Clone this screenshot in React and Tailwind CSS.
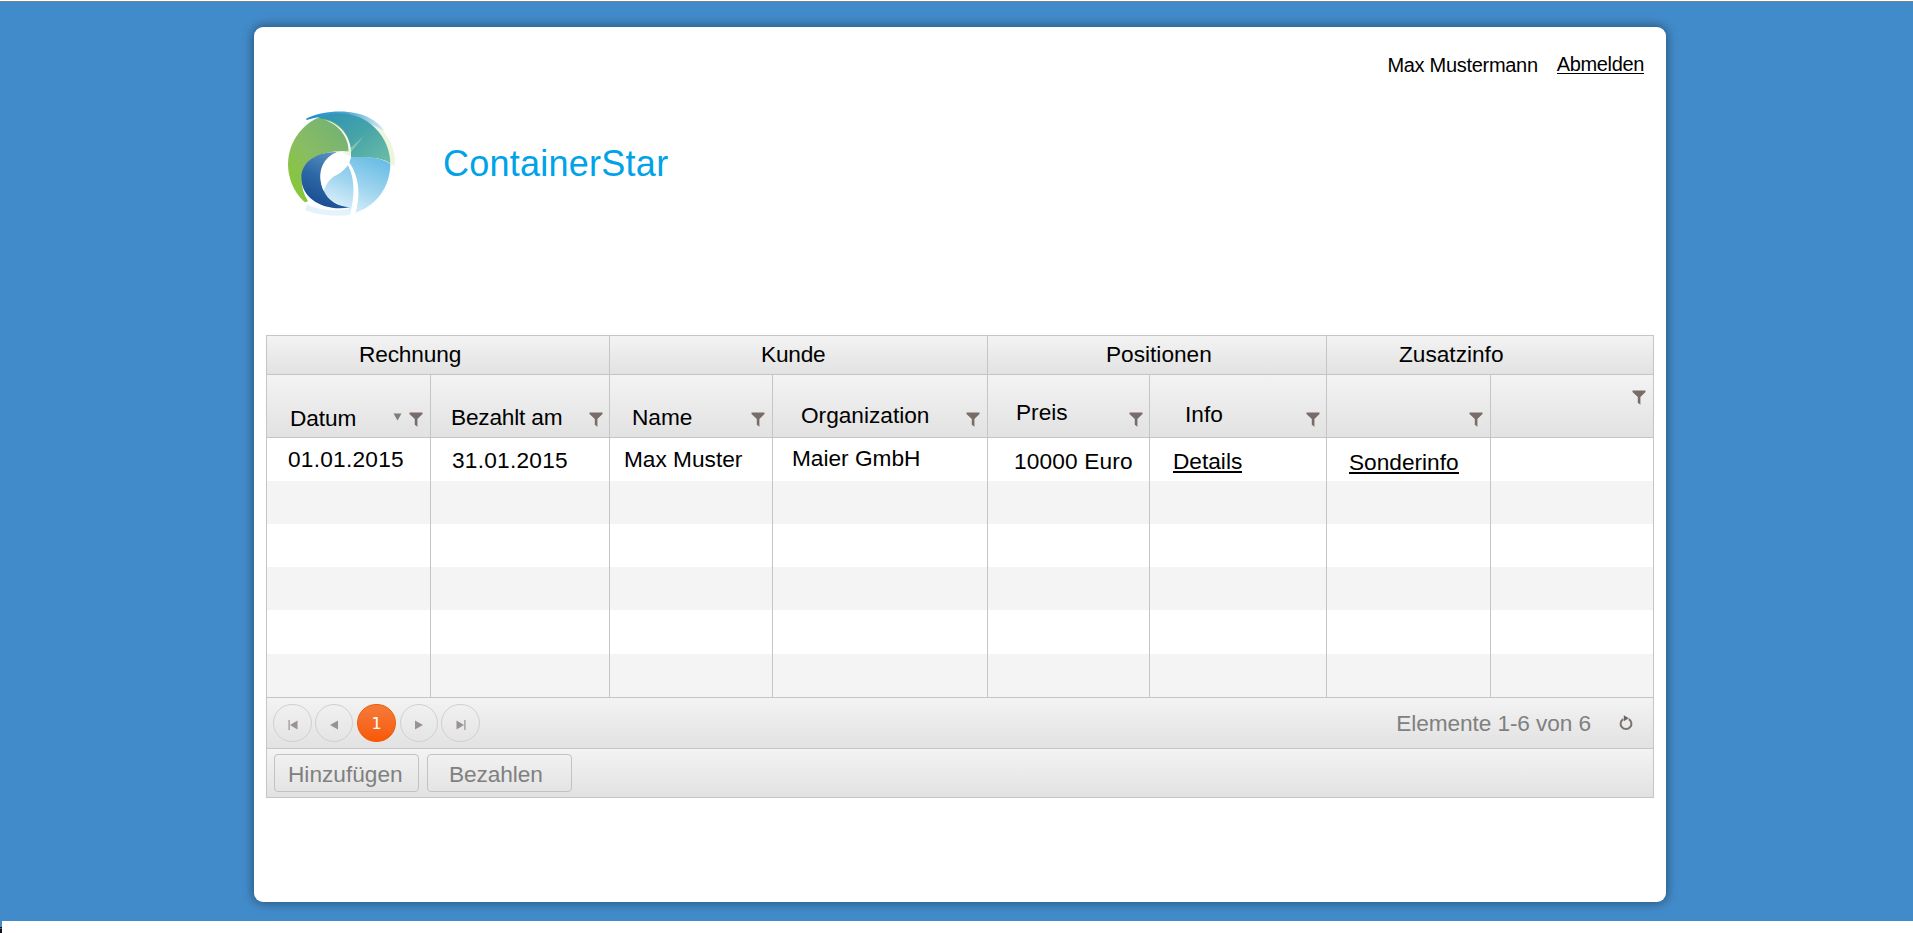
import React from "react";

const Funnel = ({ className = "" }) => (
  <svg className={`h-[16px] w-[14px] shrink-0 ${className}`} viewBox="0 0 14 16">
    <path d="M0.5 0.5H13.5V2L8.4 7V14.8L5.8 12.8V7L0.5 2Z" fill="#776c67" />
  </svg>
);

const Logo = () => (
  <svg className="h-[135px] w-[140px] shrink-0" viewBox="0 0 420 405">
    <defs>
      <linearGradient id="green" x1="1" y1="0" x2="0.1" y2="1">
        <stop offset="0" stopColor="#6fb078" />
        <stop offset="0.5" stopColor="#8abd62" />
        <stop offset="1" stopColor="#86cc20" />
      </linearGradient>
      <linearGradient id="teal" x1="0" y1="0" x2="1" y2="0.8">
        <stop offset="0" stopColor="#2b91b8" />
        <stop offset="0.5" stopColor="#45a3a8" />
        <stop offset="1" stopColor="#6cbda6" />
      </linearGradient>
      <linearGradient id="sky" gradientUnits="userSpaceOnUse" x1="310" y1="185" x2="240" y2="350">
        <stop offset="0" stopColor="#69bde5" />
        <stop offset="0.55" stopColor="#a0d5ef" />
        <stop offset="1" stopColor="#d6eefa" />
      </linearGradient>
      <linearGradient id="navy" x1="0.7" y1="0" x2="0.3" y2="1">
        <stop offset="0" stopColor="#5b93c0" />
        <stop offset="0.5" stopColor="#2d68a6" />
        <stop offset="1" stopColor="#174b90" />
      </linearGradient>
      <linearGradient id="rim" x1="0" y1="0" x2="1" y2="0">
        <stop offset="0" stopColor="#168bd0" />
        <stop offset="0.5" stopColor="#4ca5d5" />
        <stop offset="1" stopColor="#d5ebf6" />
      </linearGradient>
      <clipPath id="ball">
        <circle cx="207.5" cy="208" r="153.5" />
      </clipPath>
    </defs>
    <path d="M310 80C352 112 379 160 374 212L355 205L300 100Z" fill="#edf6dc" />
    <path d="M112 328C150 350 205 350 258 336L256 358C205 366 145 362 105 345Z" fill="#e4f2fb" />
    <path d="M108 71C165 44 250 42 300 70C322 82 336 96 343 108C315 92 280 73 235 66C190 60 150 62 110 75Z" fill="url(#rim)" />
    <g clipPath="url(#ball)">
      <path d="M135 68C180 40 400 20 400 205H360C345 190 295 184 243 188C246 130 215 83 135 68Z" fill="url(#teal)" />
      <path d="M243 187C295 183 345 190 362 208H380V380H240L238 339C195 330 165 305 157 280C167 262 178 254 192 243C210 234 228 222 238 204Z" fill="url(#sky)" />
      <path d="M20 73H110C165 62 210 82 230 120C240 140 242 155 238 170C180 164 125 178 103 216C90 245 92 285 114 318L60 345H20Z" fill="url(#green)" />
    </g>
    <path d="M233 209C251 242 259 292 238 366L254 362C273 305 268 246 239 204Z" fill="#ffffff" />
    <path d="M160 73C213 85 247 130 243 183L235 180C241 137 214 91 160 73Z" fill="#f7fcf5" />
    <path d="M94 248C94 205 133 170 202 171C153 190 140 240 160 284C174 318 205 334 239 337C165 350 94 313 94 248Z" fill="url(#navy)" />
    <path d="M201 172C218 166 235 171 238 187C236 216 213 235 192 244C178 255 168 267 161 288C143 245 154 192 201 172Z" fill="#ffffff" />
    <path d="M187 151L218 174L238 162L282 123L244 170L239 184L222 176Z" fill="#d4ebbd" opacity="0.4" />
  </svg>
);

/* w: column width including its right rule; each text carries its own offset. */
const groups = [
  { label: "Rechnung", w: "w-[343px]", pos: "ml-[92px] tracking-[-0.15px]" },
  { label: "Kunde", w: "w-[378px]", pos: "ml-[151px] tracking-[-0.2px]" },
  { label: "Positionen", w: "w-[339px]", pos: "ml-[118px]" },
  { label: "Zusatzinfo", w: "w-[326px]", pos: "ml-[72px]" },
];

const columns = [
  { w: "w-[164px]", head: "Datum", headPos: "ml-[23px] mt-[31px] tracking-[-0.1px]", sort: true, funnel: "mr-[7px] mt-[37px]", cell: "01.01.2015", cellPos: "ml-[21px] mt-[9px] tracking-[0.25px]" },
  { w: "w-[179px]", head: "Bezahlt am", headPos: "ml-[20px] mt-[30px] tracking-[-0.2px]", funnel: "mr-[6px] mt-[37px]", cell: "31.01.2015", cellPos: "ml-[21px] mt-[10px] tracking-[0.25px]" },
  { w: "w-[163px]", head: "Name", headPos: "ml-[22px] mt-[30px]", funnel: "mr-[7px] mt-[37px]", cell: "Max Muster", cellPos: "ml-[14px] mt-[9px]" },
  { w: "w-[215px]", head: "Organization", headPos: "ml-[28px] mt-[28px]", funnel: "mr-[7px] mt-[37px]", cell: "Maier GmbH", cellPos: "ml-[19px] mt-[8px]" },
  { w: "w-[162px]", head: "Preis", headPos: "ml-[28px] mt-[25px]", funnel: "mr-[6px] mt-[37px]", cell: "10000 Euro", cellPos: "ml-[26px] mt-[11px] tracking-[0.15px]" },
  { w: "w-[177px]", head: "Info", headPos: "ml-[35px] mt-[27px]", funnel: "mr-[6px] mt-[37px]", cell: "Details", link: true, cellPos: "ml-[23px] mt-[11px]" },
  { w: "w-[164px]", head: "", headPos: "", funnel: "mr-[7px] mt-[37px]", cell: "Sonderinfo", link: true, cellPos: "ml-[22px] mt-[12px]" },
  { w: "w-[162px]", head: "", headPos: "", funnel: "mr-[7px] mt-[15px]", cell: "", cellPos: "" },
];

const rows = [
  "h-[43px] bg-white",
  "h-[43px] bg-[#f4f4f4]",
  "h-[43px] bg-white",
  "h-[43px] bg-[#f4f4f4]",
  "h-[44px] bg-white",
  "h-[43px] bg-[#f4f4f4]",
];

const bar = "bg-linear-to-b from-[#f3f3f3] to-[#e2e2e2]";
const rule = "border-r border-[#c5c5c5] last:border-r-0";

const PageButton = ({ children, className }) => (
  <button className={`flex h-[38px] items-center justify-center rounded-full border border-[#d0d0d0] pt-[3px] ${className}`}>
    <svg className="h-[10px] w-[10px]" viewBox="0 0 10 10" fill="#999290">{children}</svg>
  </button>
);

export default function App() {
  return (
    <div className="flex h-[933px] w-[1913px] flex-col overflow-hidden bg-white font-['Liberation_Sans',Arial,sans-serif] text-[22.67px] leading-[24px] text-black">
      <div className="mt-px h-px shrink-0 bg-[#77838c]" />
      <div className="h-[919px] shrink-0 bg-[#428bca] pl-[254px] pt-[25px]">
        <main className="flex h-[875px] w-[1412px] flex-col rounded-[9px] bg-white px-3 shadow-[0_0_11px_1px_rgba(0,0,0,0.42)]">
          <header className="flex h-[308px] flex-col">
            <div className="flex h-[68px] justify-end pr-[10px] text-[20px]">
              <span className="mt-[26px] whitespace-nowrap tracking-[-0.3px]">Max Mustermann</span>
              <a className="ml-[19px] mt-[25px] h-[22px] border-b border-black tracking-[-0.35px]">Abmelden</a>
            </div>
            <div className="flex pl-1">
              <Logo />
              <h1 className="ml-[33px] mt-[49px] text-[36px] leading-[40px] tracking-[0.25px] text-[#00a2e8]">ContainerStar</h1>
            </div>
          </header>

          <section className="flex h-[463px] w-[1388px] flex-col border border-[#c5c5c5]">
            <div className={`flex h-[39px] shrink-0 border-b border-[#c5c5c5] ${bar}`}>
              {groups.map((g) => (
                <div key={g.label} className={`pt-[6px] ${rule} ${g.w}`}>
                  <span className={`block whitespace-nowrap ${g.pos}`}>{g.label}</span>
                </div>
              ))}
            </div>

            <div className={`flex h-[63px] shrink-0 border-b border-[#c5c5c5] ${bar}`}>
              {columns.map((c, i) => (
                <div key={i} className={`flex items-start ${rule} ${c.w}`}>
                  <span className={`whitespace-nowrap ${c.headPos}`}>{c.head}</span>
                  <span className="grow" />
                  {c.sort && (
                    <svg className="mr-[7px] mt-[38px] h-[8px] w-[9px]" viewBox="0 0 9 8">
                      <path d="M0.5 0.5H8.5L4.5 7.5Z" fill="#857c77" />
                    </svg>
                  )}
                  <Funnel className={c.funnel} />
                </div>
              ))}
            </div>

            {rows.map((r, ri) => (
              <div key={ri} className={`flex shrink-0 ${r}`}>
                {columns.map((c, i) => (
                  <div key={i} className={`flex items-start ${rule} ${c.w}`}>
                    {ri === 0 && c.cell && (
                      <span className={`whitespace-nowrap ${c.cellPos} ${c.link ? "h-[24px] border-b-2 border-black" : ""}`}>{c.cell}</span>
                    )}
                  </div>
                ))}
              </div>
            ))}

            <div className={`flex h-[52px] shrink-0 items-start border-y border-[#c5c5c5] pl-[6px] pt-[6px] ${bar}`}>
              <PageButton className="w-[39px]">
                <path d="M0.5 0H1.7V10H0.5ZM9.5 0.5V9.5L2 5Z" />
              </PageButton>
              <PageButton className="ml-[3px] w-[38px]">
                <path d="M9 0.5V9.5L1 5Z" />
              </PageButton>
              <button className="ml-[4px] flex h-[38px] w-[39px] items-center justify-center rounded-full border border-[#ef5a05] bg-linear-to-b from-[#f47b38] to-[#f85800] pt-[2px] font-['DejaVu_Sans',sans-serif] text-[16px] text-white">
                1
              </button>
              <PageButton className="ml-[4px] w-[38px]">
                <path d="M1 0.5V9.5L9 5Z" />
              </PageButton>
              <PageButton className="ml-[3px] w-[39px]">
                <path d="M8.3 0H9.5V10H8.3ZM0.5 0.5V9.5L8 5Z" />
              </PageButton>
              <span className="ml-auto mt-[7px] whitespace-nowrap tracking-[-0.1px] text-[#808080]">Elemente 1-6 von 6</span>
              <svg className="ml-[28px] mr-[20px] mt-[11px] h-[16px] w-[14px]" viewBox="0 0 14 16">
                <path d="M9.8 4.1A5.4 5.4 0 1 1 4.2 4.1" fill="none" stroke="#7d736e" strokeWidth="2" />
                <path d="M4.8 0.3L9.8 3.2L4.8 6.2Z" fill="#6d625d" />
              </svg>
            </div>

            <div className={`flex grow items-start gap-2 pl-[7px] pt-[5px] text-[#808080] ${bar}`}>
              <button className="h-[38px] w-[145px] rounded-[4px] border border-[#c2c2c2] pl-[13px] pt-px text-left">Hinzufügen</button>
              <button className="h-[38px] w-[145px] rounded-[4px] border border-[#c2c2c2] pl-[21px] pt-[2px] text-left tracking-[-0.1px]">Bezahlen</button>
            </div>
          </section>
        </main>
      </div>
      <div className="flex h-[12px] w-[2px] shrink-0 flex-col bg-[#10151c]">
        <div className="h-[6px] bg-[#428bca]" />
        <div className="mt-px h-px bg-[#5d6670]" />
      </div>
    </div>
  );
}
